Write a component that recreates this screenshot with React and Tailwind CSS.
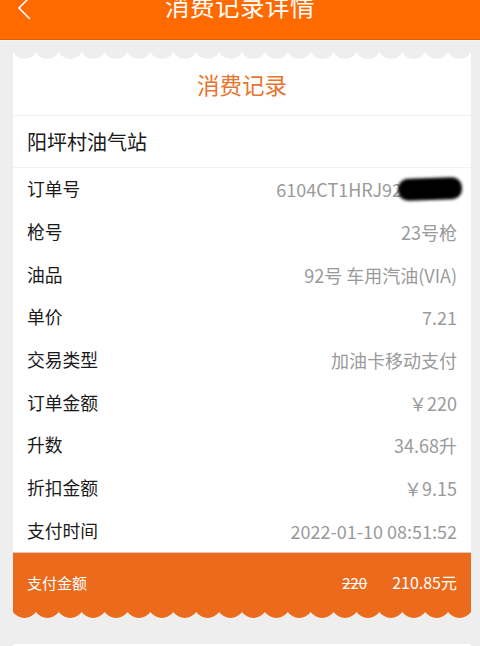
import React from "react";

const W = 458;
const N = 20;

function topScallopPath() {
  const p = W / N;
  let d = `M0 0`;
  for (let i = 0; i < N; i++) {
    const x1 = (i + 1) * p;
    d += ` A13 13 0 0 0 ${x1.toFixed(2)} 0`;
  }
  d += " Z";
  return d;
}

function bottomScallopPath() {
  const p = W / N;
  let d = `M0 0`;
  for (let i = 0; i < N; i++) {
    const x1 = (i + 1) * p;
    d += ` A14 14 0 0 0 ${x1.toFixed(2)} 0`;
  }
  d += ` L${W} 0 Z`;
  return d;
}

const rows = [
  ["订单号", null],
  ["枪号", "23号枪"],
  ["油品", "92号 车用汽油(VIA)"],
  ["单价", "7.21"],
  ["交易类型", "加油卡移动支付"],
  ["订单金额", "￥220"],
  ["升数", "34.68升"],
  ["折扣金额", "￥9.15"],
  ["支付时间", "2022-01-10 08:51:52"],
];

export default function App() {
  const font = { fontFamily: '"Noto Sans CJK SC", "Noto Sans", sans-serif' };
  return (
    <div className="min-h-[646px] bg-[#eeeeee]" style={font}>
      <div className="h-[40px] bg-[#ff6a00] border-b border-[#e66000] grid grid-cols-[48px_1fr_48px] overflow-hidden">
        <div className="flex">
          <svg width="40" height="40" viewBox="0 0 40 40" className="block">
            <polyline points="30,-3 19,8 30,19" fill="none" stroke="#ffffff" strokeWidth="1.6" />
          </svg>
        </div>
        <div className="text-center text-white text-[24.5px] leading-[24px] -mt-[6px] tracking-[0.5px]">消费记录详情</div>
        <div />
      </div>
      <div className="h-px bg-[#f8f8f8]" />

      <div className="ml-[13px] w-[458px] mt-[11px] bg-white">
        <div className="relative h-[64px] flex items-center justify-center border-b border-[#f0f0f0]">
          <svg width={W} height="8" viewBox={`0 0 ${W} 8`} className="absolute left-0 top-0 block">
            <path d={topScallopPath()} fill="#eeeeee" />
          </svg>
          <span className="text-[22.5px] leading-none text-[#e8742e] pt-[1px]">消费记录</span>
        </div>
        <div className="h-[52px] flex items-center px-[14px] border-b border-[#f2f2f2]">
          <span className="text-[20px] text-[#1a1a1a] leading-none pt-[1px]">阳坪村油气站</span>
        </div>
        {rows.map(([label, value]) => (
          <div key={label} className="h-[42.67px] flex items-center justify-between pl-[14px] pr-[14px]">
            <span className="text-[17.8px] leading-none text-[#1a1a1a]">{label}</span>
            {value === null ? (
              <span className="text-[18px] leading-none text-[#9a9a9a] flex items-center">
                6104CT1HRJ92
                <span className="inline-block w-[64px] h-[22px] bg-black rounded-[10px] blur-[1.5px] -ml-[4px] -mr-[5px] -rotate-2" />
              </span>
            ) : (
              <span className="text-[18px] leading-none text-[#9a9a9a]">{value}</span>
            )}
          </div>
        ))}
      </div>

      <div className="ml-[13px] w-[458px]">
        <div className="h-[60px] bg-[#ec6a1c] border-t border-[#e0c8b8] flex items-center justify-between px-[14px] text-white">
          <span className="text-[15px] leading-none">支付金额</span>
          <div className="flex items-center gap-[25px]">
            <span className="text-[15px] leading-none line-through">220</span>
            <span className="text-[16px] leading-none">210.85元</span>
          </div>
        </div>
        <svg width={W} height="6" viewBox={`0 0 ${W} 6`} className="block">
          <path d={bottomScallopPath()} fill="#ec6a1c" />
        </svg>
      </div>

      <div className="ml-[13px] w-[458px] mt-[26px] h-[40px] bg-white rounded-[3px]" />
    </div>
  );
}
